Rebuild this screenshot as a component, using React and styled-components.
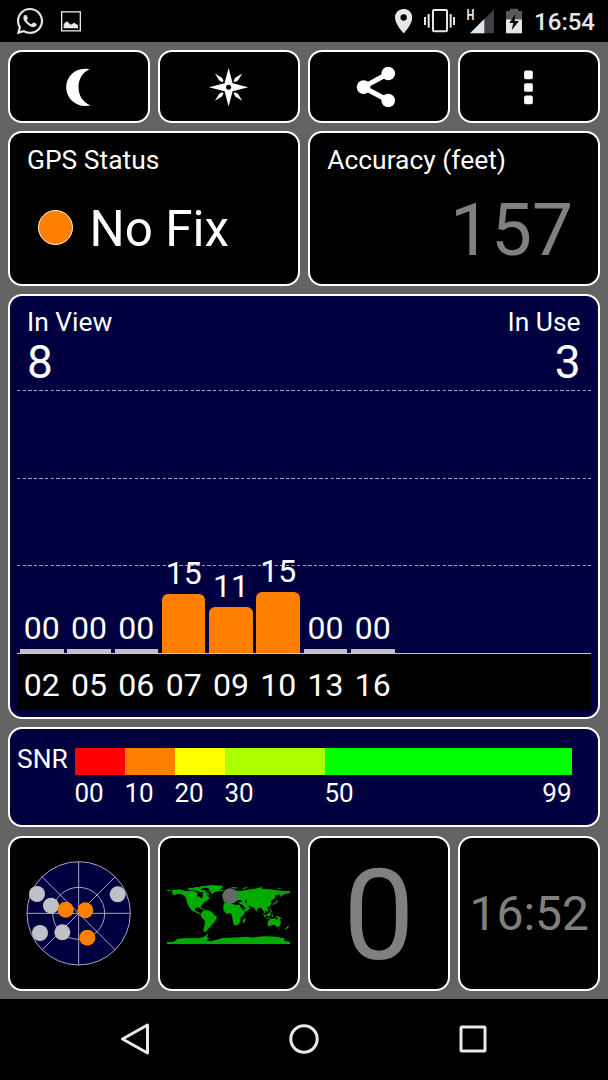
import React from "react";
import styled, { createGlobalStyle } from "styled-components";
import { FaWhatsapp } from "react-icons/fa";

const GlobalStyle = createGlobalStyle`
  * { box-sizing: border-box; }
  body { margin: 0; background: #000; font-family: Roboto, "Liberation Sans", sans-serif; color: #fff; }
`;

const Screen = styled.div`
  width: 608px;
  height: 1080px;
  display: flex;
  flex-direction: column;
  background: #000;
  overflow: hidden;
`;

const StatusBar = styled.header`
  height: 42px;
  display: flex;
  justify-content: space-between;
  padding: 0 13px 0 15px;
  svg { display: block; flex: none; }
`;

const StatusGroup = styled.div`
  display: flex;
  align-items: center;
  gap: ${(p) => p.$gap}px;
`;

const Clock = styled.span`
  font-size: 24px;
  font-weight: 500;
  line-height: 30px;
  margin-top: 2px;
  color: #e6e6e6;
`;

const Dashboard = styled.main`
  height: 957px;
  padding: 8px;
  background: #636363;
  display: grid;
  grid-template-columns: repeat(4, 1fr);
  grid-template-rows: 73px 154.4px 425.2px 100.2px 155.4px;
  gap: 8.2px 8.5px;
`;

const Card = styled.section`
  grid-column: span ${(p) => p.$span || 1};
  min-width: 0;
  border: 2px solid #fff;
  border-radius: 14px;
  background: ${(p) => (p.$navy ? "#000040" : "#000")};
  display: flex;
  flex-direction: column;
`;

const IconCard = styled(Card)`
  align-items: center;
  justify-content: center;
  svg { display: block; }
`;

const InfoCard = styled(Card)`
  padding: 11px 25px 0 17px;
`;

const Label = styled.div`
  font-size: 26.4px;
  line-height: 32px;
  white-space: nowrap;
`;

const FixRow = styled.div`
  display: flex;
  align-items: center;
  gap: 16.5px;
  margin: 24.5px 0 0 11px;
`;

const FixDot = styled.span`
  width: 35px;
  height: 35px;
  margin-bottom: 3px;
  border: 1px solid #fff3dc;
  border-radius: 50%;
  background: #ff8000;
`;

const FixText = styled.span`
  font-size: 49.4px;
  line-height: 56px;
`;

const Reading = styled.div`
  font-size: ${(p) => p.$size}px;
  line-height: ${(p) => p.$line}px;
  margin-top: ${(p) => p.$top || 0}px;
  text-align: right;
  color: #808080;
`;

const ChartCard = styled(Card)`
  padding: 10.4px 7px 7.4px;
`;

const Counters = styled.div`
  display: flex;
  justify-content: space-between;
  padding: 0 10.5px 0 10px;
`;

const Counter = styled.div`
  text-align: ${(p) => p.$align};
`;

const Count = styled.div`
  font-size: 46px;
  line-height: 44px;
  margin-top: 2px;
`;

const Plot = styled.div`
  flex: 1;
  display: grid;
  border-bottom: 1px solid #c8c8d0;
  > * { grid-area: 1 / 1; }
`;

const GridLines = styled.div`
  display: grid;
  grid-auto-rows: 87.5px;
  padding-top: 6px;
`;

const GridLine = styled.i`
  height: 1px;
  background: repeating-linear-gradient(90deg, #a0a0bc 0 3.4px, transparent 3.4px 5.6px);
`;

const Bars = styled.div`
  display: flex;
  align-items: flex-end;
  gap: 3.8px;
  padding-left: 3px;
`;

const BarSlot = styled.div`
  width: 43.5px;
  display: flex;
  flex-direction: column;
  align-items: center;
  font-size: 32px;
  line-height: 36px;
  gap: 3px;
`;

const Bar = styled.div`
  width: 100%;
  height: ${(p) => p.$height}px;
  border-radius: ${(p) => (p.$active ? "6px 6px 0 0" : "0")};
  background: ${(p) => (p.$active ? "#ff8000" : "#c0c0c8")};
`;

const Axis = styled(Bars)`
  height: 56px;
  align-items: center;
  padding-top: 6.4px;
  background: #000;
`;

const SnrCard = styled(Card)`
  flex-direction: row;
  padding: 14px 26.5px 0 7px;
`;

const SnrScale = styled.div`
  flex: 1;
  display: grid;
  grid-template-columns: 50fr 50fr 50fr 100fr 247fr;
  grid-template-rows: 27px 32px;
  row-gap: 2px;
  align-content: start;
  padding-top: 5px;
  margin-left: 5px;
`;

const Band = styled.div`
  background: ${(p) => p.$color};
`;

const Tick = styled(Label)`
  display: flex;
  justify-content: space-between;
  font-size: 26px;
`;

const SnrLabel = styled(Label)`
  width: 52.5px;
`;

const NavBar = styled.nav`
  height: 81px;
  display: flex;
  align-items: center;
  justify-content: center;
  padding-bottom: 1px;
`;

const NavButton = styled.div`
  width: 169px;
  display: flex;
  justify-content: center;
`;

const satellites = [
  { id: "02", snr: "00", height: 4 },
  { id: "05", snr: "00", height: 4 },
  { id: "06", snr: "00", height: 4 },
  { id: "07", snr: "15", height: 59, active: true },
  { id: "09", snr: "11", height: 45.5, active: true },
  { id: "10", snr: "15", height: 61, active: true },
  { id: "13", snr: "00", height: 4 },
  { id: "16", snr: "00", height: 4 },
];

const bands = ["#ff0000", "#ff8000", "#ffff00", "#aaff00", "#00ff00"];
const ticks = [["00"], ["10"], ["20"], ["30"], ["50", "99"]];

const skyDots = [
  [112, 192], [154, 227], [121, 309], [188, 307], [354, 193],
  [198, 239, true], [257, 241, true], [263, 323, true],
];

const PictureIcon = () => (
  <svg width="20" height="42" viewBox="183 0 60 126">
    <rect x="185" y="35.5" width="56" height="57" fill="none" stroke="#e6e6e6" strokeWidth="4" />
    <path d="M191 85V72L201 64L212 74L223 68L234 76V85Z" fill="#e6e6e6" />
  </svg>
);

const PinIcon = () => (
  <svg width="17.3" height="42" viewBox="272 0 52 126">
    <path fillRule="evenodd" fill="#e6e6e6" d="M298 27C283 27 272 38 272 53C272 72 298 100 298 100S324 72 324 53C324 38 313 27 298 27ZM298 43A9.5 9.5 0 1 1 298 62A9.5 9.5 0 1 1 298 43Z" />
  </svg>
);

const VibrateIcon = () => (
  <svg width="31" height="42" viewBox="363 0 93 126" fill="#e6e6e6">
    <rect x="390" y="30" width="42" height="64" rx="3" fill="none" stroke="#e6e6e6" strokeWidth="6" />
    <rect x="363" y="51" width="6" height="24" />
    <rect x="374" y="42" width="6" height="41" />
    <rect x="440" y="42" width="6" height="41" />
    <rect x="450" y="51" width="6" height="24" />
  </svg>
);

const SignalIcon = () => (
  <svg width="27" height="42" viewBox="483 0 81 126">
    <path d="M492 100H564V28Z" fill="#3f3f45" />
    <path d="M492 100H535V57Z" fill="#e6e6e6" />
    <text transform="translate(481.5 59) scale(.8 1)" fontSize="42" fontWeight="700" fill="#e6e6e6">H</text>
  </svg>
);

const BatteryIcon = () => (
  <svg width="16.3" height="42" viewBox="606 0 49 126">
    <path d="M618 26H643V33H655V58H606V33H618Z" fill="#5a5a5d" />
    <path d="M606 58H655V100H606Z" fill="#e6e6e6" />
    <path d="M634 42L616 69H628L623 91L645 63H632Z" fill="#000" />
  </svg>
);

const MoonIcon = () => (
  <svg width="50" height="50" viewBox="161.4 184.5 150 150">
    <path fill="#fff" d="M268 206C226 198 198 228 198 260C198 295 229 323 271 315C247 304 235 285 235 260C235 236 246 216 268 206Z" />
  </svg>
);

const CompassIcon = () => (
  <svg width="50" height="50" viewBox="611.7 184.5 150 150">
    <g transform="translate(685.5 260)">
      <path fill="#fff" d="M0 -58L12 -12L59 0L12 12L0 58L-12 12L-59 0L-12 -12Z" />
      {[0, 90, 180, 270].map((a) => (
        <path key={a} transform={`rotate(${a})`} fill="#fff" d="M41 -41L28 -20L19 -15L15 -19L20 -28Z" />
      ))}
      <circle r="7.5" fill="#000" />
    </g>
  </svg>
);

const ShareIcon = () => (
  <svg width="50" height="50" viewBox="150.3 184.5 150 150">
    <path d="M253 219L178 260L253 300" fill="none" stroke="#fff" strokeWidth="15" />
    <circle cx="253" cy="219" r="20.5" fill="#fff" />
    <circle cx="179" cy="260" r="20.5" fill="#fff" />
    <circle cx="253" cy="300" r="20.5" fill="#fff" />
  </svg>
);

const MoreIcon = () => (
  <svg width="50" height="50" viewBox="600.6 184.5 150 150" fill="#fff">
    {[210, 248, 285].map((y) => <rect key={y} x="661" y={y} width="26" height="26" rx="5" />)}
  </svg>
);

const SkyView = () => (
  <svg width="105" height="105" viewBox="79 93 315 315">
    <g fill="#000040" stroke="#a6a6bc" strokeWidth="3">
      <circle cx="237" cy="250" r="155" />
      <circle cx="237" cy="250" r="78" fill="none" />
      <path d="M237 95V405M82 250H392M127.4 140.4L346.6 359.6M346.6 140.4L127.4 359.6" />
    </g>
    {skyDots.map(([x, y, used]) => (
      <circle key={`${x}-${y}`} cx={x} cy={y} r="24" fill={used ? "#ff8000" : "#c0c0c8"} />
    ))}
  </svg>
);

const WorldMap = () => (
  <svg width="130" height="70" viewBox="0 0 390 210">
    <g fill="#00ab00">
      <path d="M9 36H20V39H9ZM25 35L33 36L45 34L64 39L82 38L96 41L101 47L100 54L108 57L113 62L117 54L115 46L124 43L131 53L138 61L128 68L121 73L115 79L110 87L110 93L104 88L93 90L93 98L101 101L106 104L112 108L118 108L114 112L107 108L98 104L85 99L79 92L72 82L68 71L66 59L57 50L44 47L30 51L25 48Z" />
      <path d="M69 33L78 29L86 31L94 27L105 28L113 24L126 24L121 30L109 33L113 37L122 37L130 44L138 49L132 51L124 44L110 42L99 38L80 37Z" />
      <path d="M112 28L125 23L145 21L178 24L172 32L166 38L153 42L144 49L138 40L133 31Z" />
      <path d="M107 88L116 91L123 94L121 96L112 92Z" />
      <path d="M117 98L127 96L137 98L147 105L151 111L159 116L157 122L151 133L144 140L138 147L133 153L125 161L119 162L119 151L123 137L122 127L114 119L110 112L113 104Z" />
      <path d="M180 44L196 36L212 38L230 39L250 35L270 32L286 29L301 33L319 34L335 36L350 38L378 40V45L366 47L356 51L350 58L348 49L333 52L333 60L326 65L320 70L323 77L317 84L309 88L313 97L307 101L302 95L304 107L310 114L306 113L298 98L291 89L282 90L277 101L271 90L260 85L251 83L259 90L250 98L243 101L235 87L230 78L224 74L219 68L210 75L204 67L195 72L184 74L178 68L182 57L176 52Z" />
      <path d="M180 75L191 73L202 76L212 80L226 80L234 94L243 101L239 110L230 118L229 131L222 140L212 143L207 131L205 119L202 106L188 107L178 97V83Z" />
      <path d="M242 121L246 123L240 136L236 134L237 127Z" />
      <path d="M311 131L319 122L328 123L332 119L339 125L345 118L351 132L348 143L340 148L331 140L319 143L311 144Z" />
      <path d="M296 105L301 109L307 118L302 117ZM310 107L319 101L320 110L315 115L309 114ZM305 119L319 120L318 122L305 121ZM324 108L328 111L325 118L322 112ZM334 113L348 117L354 123L340 121ZM317 87L320 94L325 101L321 101L317 94ZM324 81L327 77L336 72L339 65L342 66L339 74L331 79ZM370 145L376 143L372 149L365 155L363 153ZM344 149L348 149L346 153Z" />
      <path d="M198 28L210 27L222 29L215 32ZM236 31L249 27L250 29L240 34ZM284 26L296 27L291 30ZM166 37L178 36L177 40L170 40ZM342 31L354 32L353 34L342 33Z" />
      <path d="M9 192H27L36 187L40 182L60 181L84 180L104 181L118 178L128 170L133 169L129 178L136 182L126 187L140 190L158 185L176 180L202 179L225 178L250 176L267 179L282 176L307 175L335 176L361 181L361 188L378 192V198H9Z" />
    </g>
    <path d="M222 78L236 80L246 94L242 94L232 84ZM217 68L229 65L236 70L228 73ZM242 66L247 65L249 74L245 75Z" fill="#000" />
    <circle cx="198.5" cy="54" r="23.5" fill="#686868" />
  </svg>
);

export default function App() {
  return (
    <Screen>
      <GlobalStyle />
      <StatusBar>
        <StatusGroup $gap={15.5}>
          <FaWhatsapp size={30} color="#e6e6e6" />
          <PictureIcon />
        </StatusGroup>
        <StatusGroup $gap={12}>
          <PinIcon />
          <VibrateIcon />
          <SignalIcon />
          <BatteryIcon />
          <Clock>16:54</Clock>
        </StatusGroup>
      </StatusBar>

      <Dashboard>
        <IconCard><MoonIcon /></IconCard>
        <IconCard><CompassIcon /></IconCard>
        <IconCard><ShareIcon /></IconCard>
        <IconCard><MoreIcon /></IconCard>

        <InfoCard $span={2}>
          <Label>GPS Status</Label>
          <FixRow>
            <FixDot />
            <FixText>No Fix</FixText>
          </FixRow>
        </InfoCard>
        <InfoCard $span={2}>
          <Label>Accuracy (feet)</Label>
          <Reading $size={73} $line={80} $top={13.5}>157</Reading>
        </InfoCard>

        <ChartCard $span={4} $navy>
          <Counters>
            <Counter $align="left">
              <Label>In View</Label>
              <Count>8</Count>
            </Counter>
            <Counter $align="right">
              <Label>In Use</Label>
              <Count>3</Count>
            </Counter>
          </Counters>
          <Plot>
            <GridLines><GridLine /><GridLine /><GridLine /></GridLines>
            <Bars>
              {satellites.map((s) => (
                <BarSlot key={s.id}>
                  {s.snr}
                  <Bar $height={s.height} $active={s.active} />
                </BarSlot>
              ))}
            </Bars>
          </Plot>
          <Axis>
            {satellites.map((s) => <BarSlot key={s.id}>{s.id}</BarSlot>)}
          </Axis>
        </ChartCard>

        <SnrCard $span={4} $navy>
          <SnrLabel>SNR</SnrLabel>
          <SnrScale>
            {bands.map((c) => <Band key={c} $color={c} />)}
            {ticks.map((t) => (
              <Tick key={t[0]}>{t.map((v) => <span key={v}>{v}</span>)}</Tick>
            ))}
          </SnrScale>
        </SnrCard>

        <IconCard><SkyView /></IconCard>
        <IconCard><WorldMap /></IconCard>
        <IconCard><Reading $size={127} $line={140} $top={5}>0</Reading></IconCard>
        <IconCard><Reading $size={48} $line={56} $top={2}>16:52</Reading></IconCard>
      </Dashboard>

      <NavBar>
        <NavButton>
          <svg width="32" height="34" viewBox="0 0 32 34">
            <path d="M28.5 3V31L3.5 17Z" fill="none" stroke="#e9e9e9" strokeWidth="3" strokeLinejoin="round" />
          </svg>
        </NavButton>
        <NavButton>
          <svg width="32" height="32" viewBox="0 0 32 32">
            <circle cx="16" cy="16" r="13.2" fill="none" stroke="#e9e9e9" strokeWidth="3" />
          </svg>
        </NavButton>
        <NavButton>
          <svg width="32" height="32" viewBox="0 0 32 32">
            <rect x="4" y="4" width="24" height="24" rx="1" fill="none" stroke="#e9e9e9" strokeWidth="3" />
          </svg>
        </NavButton>
      </NavBar>
    </Screen>
  );
}
